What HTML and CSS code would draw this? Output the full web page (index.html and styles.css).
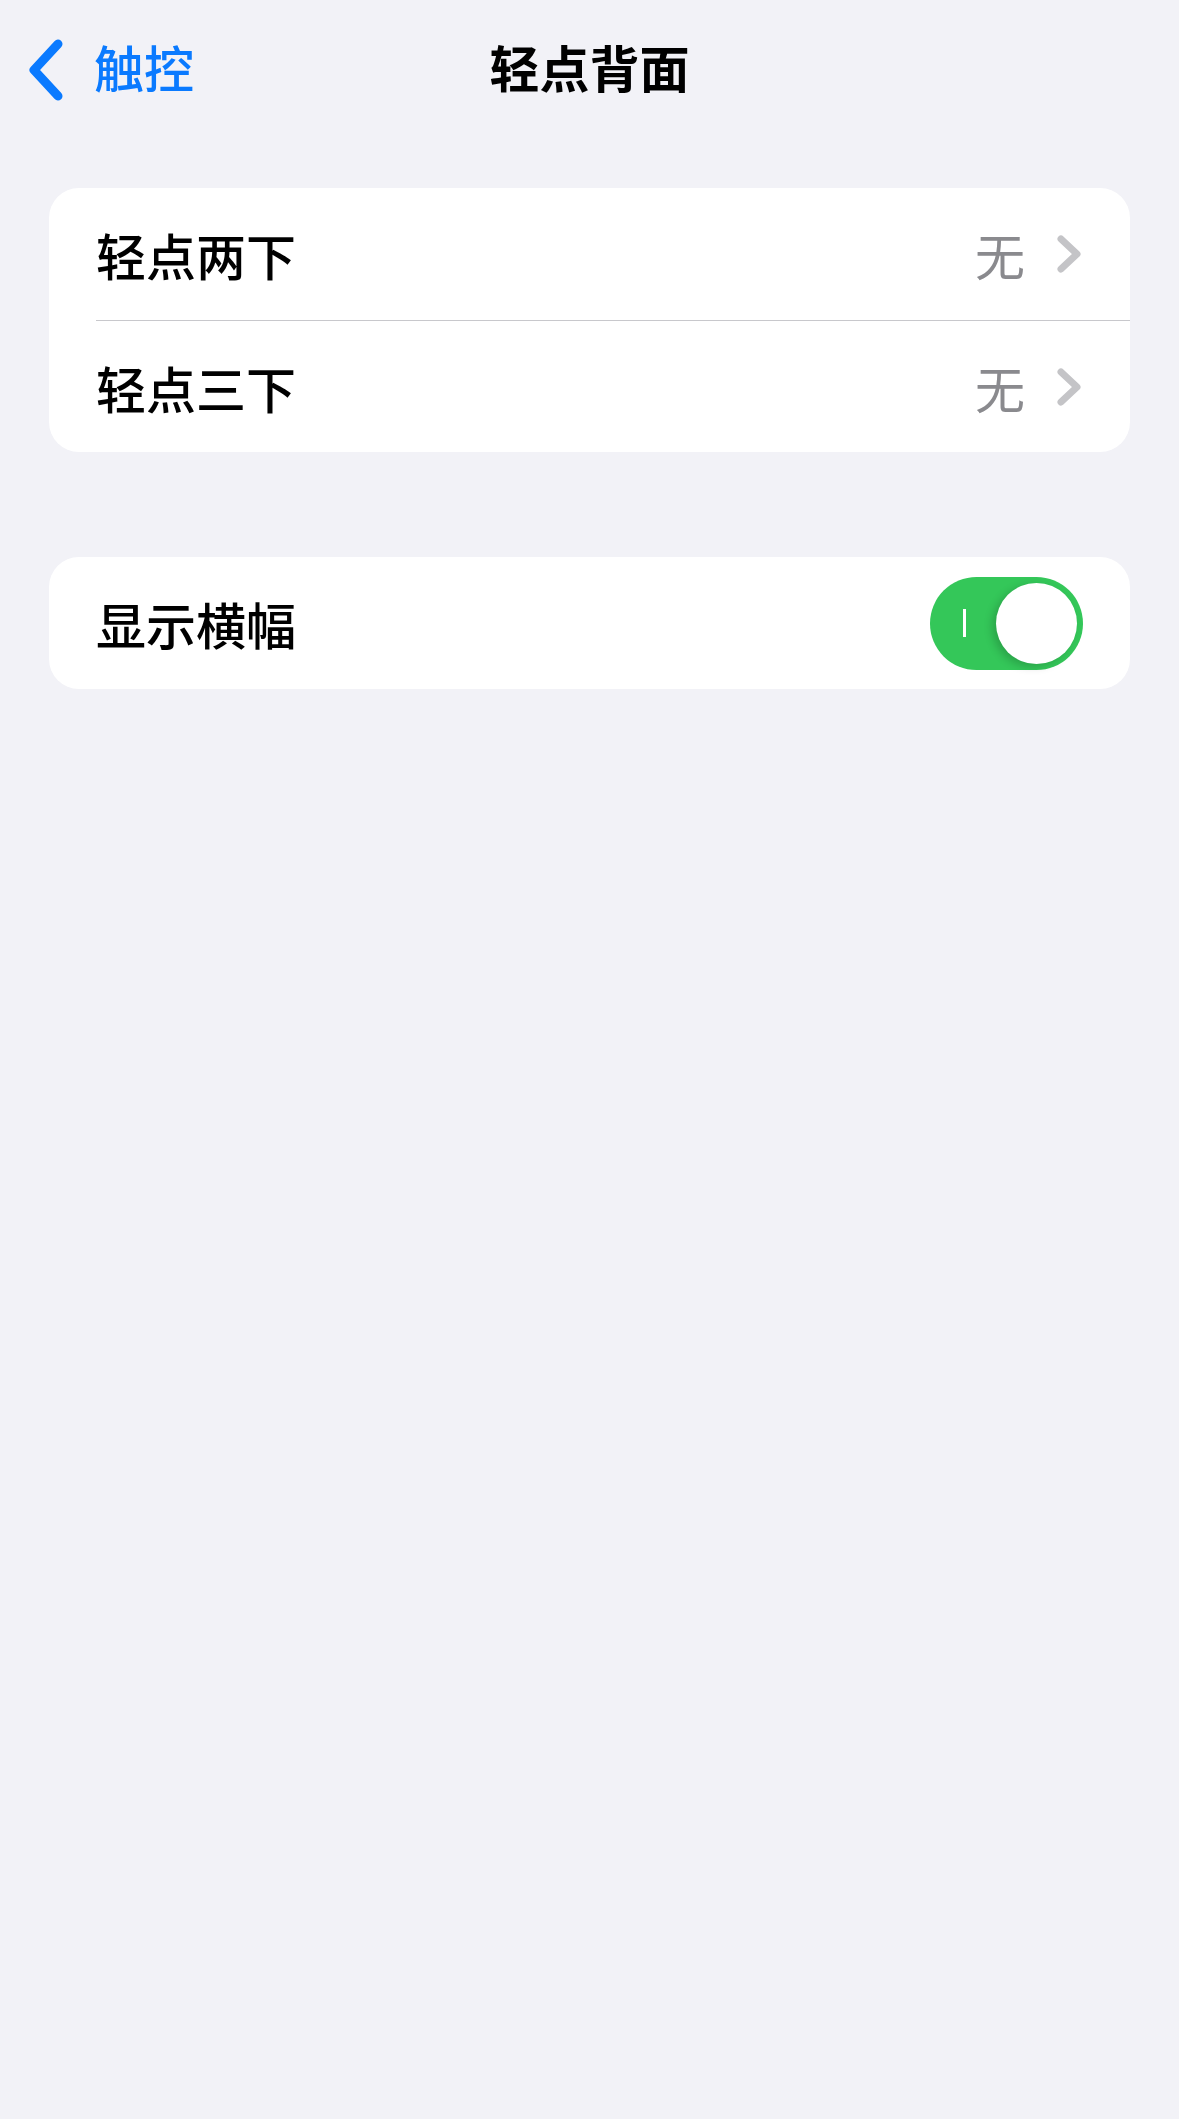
FILE: index.html
```html
<!DOCTYPE html>
<html lang="zh-CN">
<head>
    <meta charset="UTF-8">
    <title>轻点背面</title>
    <link rel="stylesheet" href="styles.css">
</head>
<body>
    <header class="nav-bar">
        <a class="back-link" href="#">
            <svg class="back-chevron" width="40" height="64" viewBox="0 0 40 64">
                <polyline points="32,6 8,32 32,58" fill="none" stroke="#0a7aff" stroke-width="9" stroke-linecap="round" stroke-linejoin="round"/>
            </svg>
            <span>触控</span>
        </a>
        <h1 class="nav-title">轻点背面</h1>
        <div></div>
    </header>

    <main class="settings">
        <section class="group">
            <div class="row">
                <span class="row-label">轻点两下</span>
                <span class="row-value">无</span>
                <svg class="row-chevron" width="28" height="40" viewBox="0 0 28 40">
                    <polyline points="6,5 22,20 6,35" fill="none" stroke="#c4c4c7" stroke-width="7" stroke-linecap="round" stroke-linejoin="round"/>
                </svg>
            </div>
            <div class="row">
                <span class="row-label">轻点三下</span>
                <span class="row-value">无</span>
                <svg class="row-chevron" width="28" height="40" viewBox="0 0 28 40">
                    <polyline points="6,5 22,20 6,35" fill="none" stroke="#c4c4c7" stroke-width="7" stroke-linecap="round" stroke-linejoin="round"/>
                </svg>
            </div>
        </section>

        <section class="group">
            <div class="row">
                <span class="row-label">显示横幅</span>
                <div class="switch on">
                    <span class="switch-mark"></span>
                    <span class="switch-knob"></span>
                </div>
            </div>
        </section>
    </main>
</body>
</html>
```

FILE: styles.css
```css
body {
    margin: 0;
    padding: 0;
    background-color: #f2f2f7;
    color: #000;
    font-family: "Noto Sans CJK SC", "Noto Sans", sans-serif;
    min-height: 2119px;
}
.nav-bar {
    display: grid;
    grid-template-columns: 1fr auto 1fr;
    align-items: center;
    height: 132px;
}
.back-link {
    display: flex;
    align-items: center;
    gap: 28px;
    padding-left: 26px;
    color: #0a7aff;
    text-decoration: none;
    font-size: 50px;
    font-weight: 500;
}
.back-chevron {
    display: block;
    margin-top: 8px;
}
.nav-title {
    margin: 0;
    font-size: 50px;
    font-weight: 700;
}
.settings {
    padding: 56px 49px 0;
    display: flex;
    flex-direction: column;
    gap: 105px;
}
.group {
    background-color: #fff;
    border-radius: 30px;
    overflow: hidden;
}
.row {
    display: flex;
    align-items: center;
    height: 132px;
    margin-left: 47px;
    padding-right: 47px;
    font-size: 50px;
    font-weight: 500;
}
.row + .row {
    border-top: 1px solid #c8c8cc;
    height: 131px;
}
.row-label {
    flex: 1;
}
.row-value {
    color: #8a8a8e;
    font-weight: 400;
    margin-right: 30px;
}
.row-chevron {
    display: block;
}
.switch {
    position: relative;
    width: 153px;
    height: 93px;
    border-radius: 47px;
    background-color: #e9e9eb;
}
.switch.on {
    background-color: #34c759;
}
.switch-mark {
    position: absolute;
    left: 33px;
    top: 32px;
    width: 3px;
    height: 28px;
    background-color: #fff;
}
.switch-knob {
    position: absolute;
    top: 6px;
    right: 6px;
    width: 81px;
    height: 81px;
    border-radius: 50%;
    background-color: #fff;
    box-shadow: -4px 3px 8px rgba(0, 0, 0, 0.18);
}
```
